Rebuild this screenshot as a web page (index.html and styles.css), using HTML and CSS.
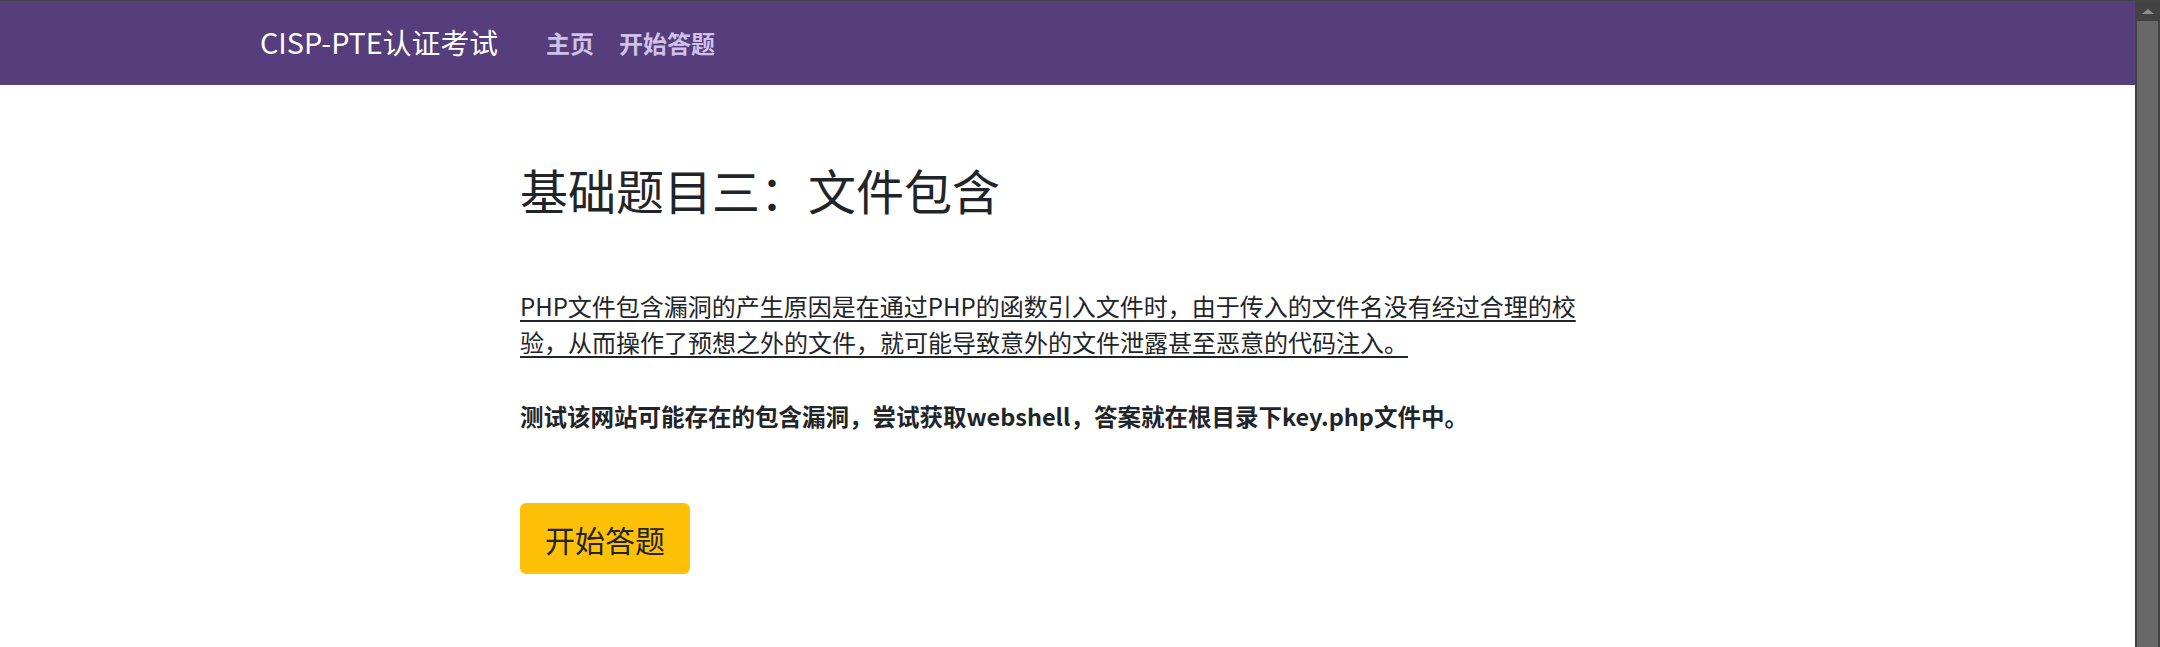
FILE: index.html
```html
<!DOCTYPE html>
<html lang="zh-CN">
<head>
<meta charset="utf-8">
<title>CISP-PTE认证考试</title>
<link rel="stylesheet" href="styles.css">
</head>
<body>
<div class="window">
  <div class="page">
    <nav class="navbar">
      <a class="brand" href="#">CISP-PTE认证考试</a>
      <ul class="nav">
        <li><a href="#">主页</a></li>
        <li><a href="#">开始答题</a></li>
      </ul>
    </nav>
    <main class="content">
      <h2 class="title">基础题目三：文件包含</h2>
      <p class="desc"><a href="#">PHP文件包含漏洞的产生原因是在通过PHP的函数引入文件时，由于传入的文件名没有经过合理的校验，从而操作了预想之外的文件，就可能导致意外的文件泄露甚至恶意的代码注入。</a></p>
      <p class="task">测试该网站可能存在的包含漏洞，尝试获取webshell，答案就在根目录下key.php文件中。</p>
      <a class="btn" href="#">开始答题</a>
    </main>
  </div>
  <div class="scrollbar">
    <div class="arrow"></div>
    <div class="thumb"></div>
  </div>
</div>
</body>
</html>
```

FILE: styles.css
```css
* { box-sizing: border-box; }
html, body {
  margin: 0;
  padding: 0;
  background: #fff;
  overflow: hidden;
}
body {
  font-family: "Noto Sans CJK SC", "Noto Sans", sans-serif;
  color: #212529;
}
.window {
  display: flex;
  width: 2160px;
  height: 647px;
  border-top: 1px solid #444;
}
.page {
  flex: 1;
  min-width: 0;
}
.navbar {
  height: 84px;
  background: #563d7c;
  display: flex;
  align-items: center;
  padding-left: 260px;
}
.brand {
  color: #fff;
  text-decoration: none;
  font-size: 28.8px;
  line-height: 1.5;
  margin-top: -2px;
}
.nav {
  list-style: none;
  margin: 0 0 0 48px;
  padding: 0;
  display: flex;
  gap: 25px;
}
.nav a {
  color: #cfc2e8;
  text-decoration: none;
  font-size: 24px;
  font-weight: 700;
  line-height: 1.5;
}
.content {
  padding-left: 520px;
  width: 1590px;
  display: flex;
  flex-direction: column;
  align-items: flex-start;
}
.title {
  margin: 75px 0 0;
  font-size: 48px;
  font-weight: 400;
  line-height: 58px;
}
.desc {
  margin: 70px 0 0;
  font-size: 24px;
  line-height: 36px;
}
.desc a {
  color: #212529;
  text-decoration: underline;
  text-decoration-thickness: 2px;
  text-underline-offset: 4px;
}
.task {
  margin: 38px 0 0;
  font-size: 23.5px;
  font-weight: 700;
  line-height: 36px;
}
.btn {
  margin-top: 69px;
  display: inline-flex;
  align-items: center;
  justify-content: center;
  width: 170px;
  height: 71px;
  background: #ffc107;
  border-radius: 6px;
  color: #212529;
  text-decoration: none;
  font-size: 30px;
}
.scrollbar {
  width: 25px;
  background: #424242;
  display: flex;
  flex-direction: column;
  align-items: center;
  padding: 0 2px 0 2px;
}
.arrow {
  height: 20px;
  width: 100%;
  display: flex;
  align-items: center;
  justify-content: center;
}
.arrow::before {
  content: "";
  border-left: 6px solid transparent;
  border-right: 6px solid transparent;
  border-bottom: 5px solid #8d8d8d;
}
.thumb {
  flex: 1;
  width: 21px;
  background: #686868;
}
```
